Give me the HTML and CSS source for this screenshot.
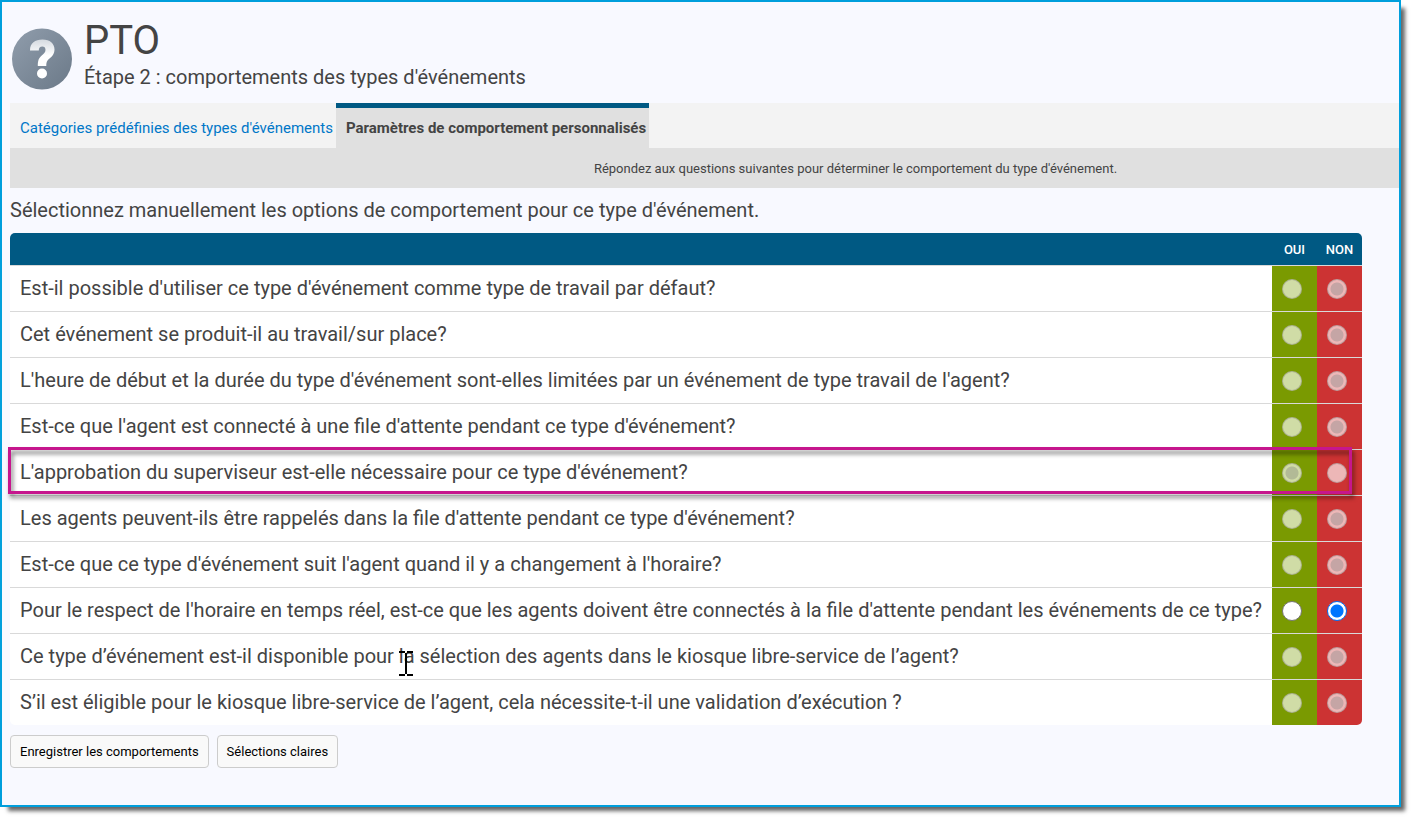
FILE: index.html
```html
<!DOCTYPE html>
<html lang="fr">
<head>
  <meta charset="UTF-8" />
  <meta name="viewport" content="width=device-width, initial-scale=1" />
  <title>PTO - Comportements des types d'événements</title>
  <link rel="stylesheet" href="styles.css">
</head>
<body>
  <main class="window">
    <header class="page-header">
      <svg class="help-icon" viewBox="0 0 60 62" aria-hidden="true">
        <defs>
          <linearGradient id="disc" x1="0" y1="0" x2="1" y2="1">
            <stop offset="0" stop-color="#909dac" />
            <stop offset="1" stop-color="#6b7988" />
          </linearGradient>
          <linearGradient id="mark" x1="0" y1="0" x2="0" y2="1">
            <stop offset="0" stop-color="#d5dae0" />
            <stop offset="0.6" stop-color="#ffffff" />
          </linearGradient>
        </defs>
        <ellipse cx="30" cy="31" rx="30" ry="30.5" fill="url(#disc)" />
        <path fill="url(#mark)" d="M18 22.500C18 15 23 11.500 30.500 11.500C38 11.500 42.500 15.500 42.500 21.500C42.500 26 40 28.500 37.500 30.500C35 32.500 34.300 34 34.300 38H25.800C25.800 32 27 29.700 30 27.200C32 25.500 33.500 24.300 33.500 21.800C33.500 19.700 32.300 18.500 30.300 18.500C28 18.500 26.800 20 26.800 22.500Z" />
        <circle cx="30" cy="45.500" r="5" fill="#fff" />
      </svg>
      <div>
        <h1>PTO</h1>
        <h2>Étape 2 : comportements des types d'événements</h2>
      </div>
    </header>

    <nav class="tabs">
      <a href="#categories">Catégories prédéfinies des types d'événements</a>
      <a href="#custom" class="active">Paramètres de comportement personnalisés</a>
    </nav>
    <p class="note">Répondez aux questions suivantes pour déterminer le comportement du type d'événement.</p>

    <form id="custom">
      <p class="intro">Sélectionnez manuellement les options de comportement pour ce type d'événement.</p>
      <table class="questions">
        <thead>
          <tr>
            <th></th>
            <th id="yes" scope="col">OUI</th>
            <th id="no" scope="col">NON</th>
          </tr>
        </thead>
        <tbody>
          <tr>
            <td id="q1">Est-il possible d'utiliser ce type d'événement comme type de travail par défaut?</td>
            <td class="yes"><input type="radio" name="q1" aria-labelledby="q1 yes" disabled></td>
            <td class="no"><input type="radio" name="q1" aria-labelledby="q1 no" checked disabled></td>
          </tr>
          <tr>
            <td id="q2">Cet événement se produit-il au travail/sur place?</td>
            <td class="yes"><input type="radio" name="q2" aria-labelledby="q2 yes" disabled></td>
            <td class="no"><input type="radio" name="q2" aria-labelledby="q2 no" checked disabled></td>
          </tr>
          <tr>
            <td id="q3">L'heure de début et la durée du type d'événement sont-elles limitées par un événement de type travail de l'agent?</td>
            <td class="yes"><input type="radio" name="q3" aria-labelledby="q3 yes" disabled></td>
            <td class="no"><input type="radio" name="q3" aria-labelledby="q3 no" checked disabled></td>
          </tr>
          <tr>
            <td id="q4">Est-ce que l'agent est connecté à une file d'attente pendant ce type d'événement?</td>
            <td class="yes"><input type="radio" name="q4" aria-labelledby="q4 yes" disabled></td>
            <td class="no"><input type="radio" name="q4" aria-labelledby="q4 no" checked disabled></td>
          </tr>
          <tr class="marked">
            <td id="q5">L'approbation du superviseur est-elle nécessaire pour ce type d'événement?<span class="marker"></span></td>
            <td class="yes"><input type="radio" name="q5" aria-labelledby="q5 yes" checked disabled></td>
            <td class="no"><input type="radio" name="q5" aria-labelledby="q5 no" disabled></td>
          </tr>
          <tr>
            <td id="q6">Les agents peuvent-ils être rappelés dans la file d'attente pendant ce type d'événement?</td>
            <td class="yes"><input type="radio" name="q6" aria-labelledby="q6 yes" disabled></td>
            <td class="no"><input type="radio" name="q6" aria-labelledby="q6 no" checked disabled></td>
          </tr>
          <tr>
            <td id="q7">Est-ce que ce type d'événement suit l'agent quand il y a changement à l'horaire?</td>
            <td class="yes"><input type="radio" name="q7" aria-labelledby="q7 yes" disabled></td>
            <td class="no"><input type="radio" name="q7" aria-labelledby="q7 no" checked disabled></td>
          </tr>
          <tr>
            <td id="q8">Pour le respect de l'horaire en temps réel, est-ce que les agents doivent être connectés à la file d'attente pendant les événements de ce type?</td>
            <td class="yes"><input type="radio" name="q8" aria-labelledby="q8 yes"></td>
            <td class="no"><input type="radio" name="q8" aria-labelledby="q8 no" checked></td>
          </tr>
          <tr class="pointed">
            <td id="q9">Ce type d’événement est-il disponible pour la sélection des agents dans le kiosque libre-service de l’agent?
              <svg class="cursor" viewBox="0 0 14 25" aria-hidden="true">
                <path d="M0 1H6M8 1H14M0 24H6M8 24H14M7 2V23" fill="none" stroke="#000" stroke-width="2" />
              </svg>
            </td>
            <td class="yes"><input type="radio" name="q9" aria-labelledby="q9 yes" disabled></td>
            <td class="no"><input type="radio" name="q9" aria-labelledby="q9 no" checked disabled></td>
          </tr>
          <tr>
            <td id="q10">S’il est éligible pour le kiosque libre-service de l’agent, cela nécessite-t-il une validation d’exécution ?</td>
            <td class="yes"><input type="radio" name="q10" aria-labelledby="q10 yes" disabled></td>
            <td class="no"><input type="radio" name="q10" aria-labelledby="q10 no" checked disabled></td>
          </tr>
        </tbody>
      </table>
      <div class="buttons">
        <button type="submit">Enregistrer les comportements</button>
        <button type="reset">Sélections claires</button>
      </div>
    </form>
  </main>
</body>
</html>
```

FILE: styles.css
```css
* { margin:0; padding:0; box-sizing:border-box }
body {
  font-family:Roboto,sans-serif;
  font-size:20px; line-height:24px; color:#444;
  background:#fff;
}
.window {
  margin:0 14px 14px 0;
  min-height:calc(100vh - 14px);
  padding:16px 0 36px 8px;
  background:#f8f9ff;
  border:2px solid #009fdc;
  box-shadow:6px 6px 4px -2px rgba(0,0,0,0.6);
}

/* header */
.page-header { display:flex; align-items:center; gap:12px; margin-bottom:13px; padding-left:2px }
.help-icon { width:60px; height:62px; margin-top:9px }
h1 { font-size:40px; line-height:46px; font-weight:400 }
h2 { font-size:20px; line-height:26px; font-weight:400 }

/* tabs */
.tabs { display:flex; background:#f3f3f3 }
.tabs a {
  padding:8px 3px 7px 10px;
  border-top:5px solid transparent;
  font-size:15px; line-height:25px;
  color:#0077c8; text-decoration:none;
}
.tabs a.active {
  background:#e0e0e0; border-color:#005983;
  color:#444; font-weight:700;
}
.note {
  padding:11px 0 9px 302px;
  background:#e0e0e0;
  font-size:13px; line-height:20px; text-align:center;
}
.intro { padding:10px 0 11px }

/* questions */
.questions { border-spacing:0 }
th {
  height:32px; padding-top:2px; background:#005983; color:#fff;
  font-size:13px; line-height:20px; font-weight:500;
}
th:first-child { border-top-left-radius:5px }
th:last-child { border-top-right-radius:5px }
td {
  height:46px; padding:0 10px;
  background:#fff; border-top:1px solid #d9d9d9;
}
td:first-child { padding-bottom:2px }
td.yes, td.no { width:45px; min-width:45px; padding-right:15px }
td.yes { background:#7a9a01 }
td.no { background:#cc3333 }
tr:last-child td:first-child { border-bottom-left-radius:5px }
tr:last-child td:last-child { border-bottom-right-radius:5px }

input[type="radio"] {
  display:block; width:20px; height:20px;
  appearance:none; border:1px solid #767676; border-radius:50%;
  background:#fff;
}
input[type="radio"]:checked {
  border-color:#0075ff;
  background:radial-gradient(circle,#0075ff 6px,#fff 7px);
}
input[type="radio"]:disabled {
  border-color:rgba(118,118,118,0.4);
  background:rgba(255,255,255,0.65);
}
input[type="radio"]:disabled:checked {
  background:radial-gradient(circle,#c5a5a5 6px,rgba(255,255,255,0.65) 7px);
}
.yes input[type="radio"]:disabled:checked {
  background:radial-gradient(circle,#b2ba96 6px,rgba(255,255,255,0.65) 7px);
}

.marked, .pointed { position:relative }
.marker {
  position:absolute; top:-2px; bottom:1px; left:-2px; right:10px;
  border:3px solid #c6168d; pointer-events:none;
  filter:drop-shadow(2px 4px 2px rgba(0,0,0,0.5));
}
.cursor { position:absolute; left:389px; top:18px; width:14px; height:25px }

.buttons { display:flex; gap:8px; padding-top:10px }
.buttons button {
  padding:0 9px; height:33px;
  font-family:Roboto,sans-serif; font-size:13px; color:#000;
  background:#f9f9f9; border:1px solid #ccc; border-radius:4px;
}
```
